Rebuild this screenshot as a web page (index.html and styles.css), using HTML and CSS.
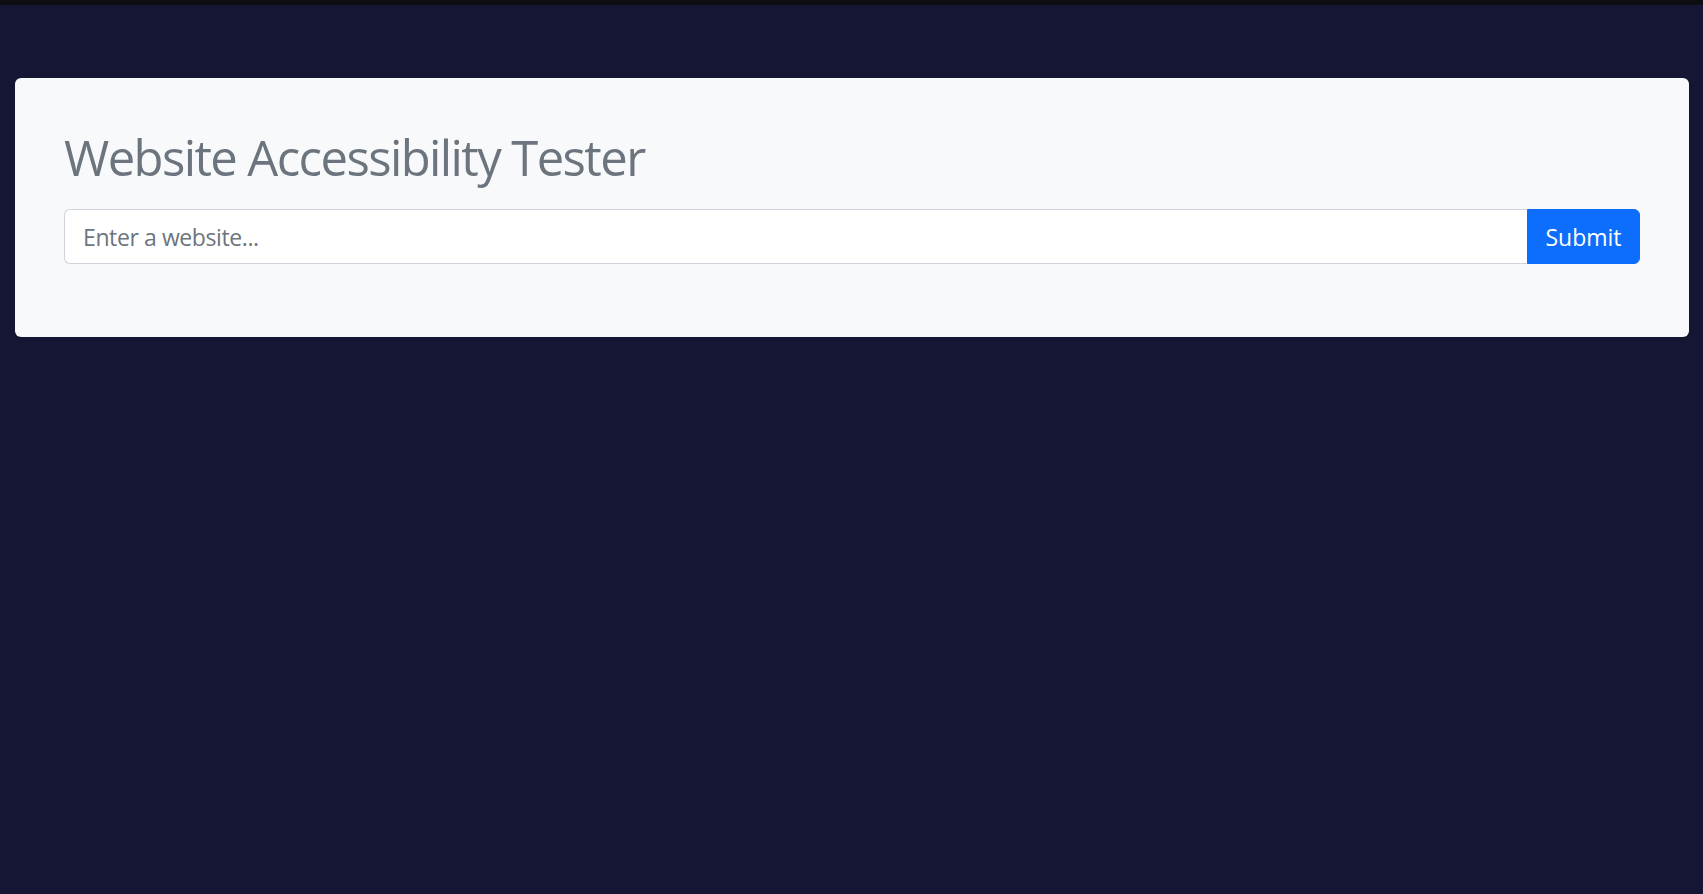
FILE: index.html
```html
<!DOCTYPE html>
<html lang="en">
<head>
<meta charset="utf-8">
<title>Website Accessibility Tester</title>
<link rel="stylesheet" href="styles.css">
</head>
<body>
<div class="topbar"></div>
<main class="page">
  <section class="card">
    <h1 class="title">Website Accessibility Tester</h1>
    <form class="search" onsubmit="return false;">
      <input class="search-input" type="text" placeholder="Enter a website...">
      <button class="search-btn" type="submit">Submit</button>
    </form>
  </section>
</main>
</body>
</html>
```
FILE: styles.css
```css
html, body {
  margin: 0;
  padding: 0;
}
body {
  background: #141634;
  min-height: 894px;
  font-family: "Open Sans", "Noto Sans", sans-serif;
}
.topbar {
  height: 5px;
  background: #0e0e12;
}
.page {
  padding: 73px 14px 0 15px;
}
.card {
  background: #f8f9fa;
  border-radius: 6px;
  padding: 49px 49px 73px 49px;
}
.title {
  margin: 0 0 22px 0;
  font-size: 49px;
  line-height: 60px;
  letter-spacing: -1.6px;
  font-weight: 400;
  color: #6c757d;
}
.search {
  display: flex;
  margin: 0;
}
.search-input {
  flex: 1;
  box-sizing: border-box;
  height: 55px;
  margin: 0;
  padding: 1px 18px 0 18px;
  border: 1px solid #ced4da;
  border-right: none;
  border-radius: 6px 0 0 6px;
  background: #fff;
  font-family: inherit;
  font-size: 23px;
  letter-spacing: -0.4px;
  color: #212529;
  outline: none;
}
.search-input::placeholder {
  color: #6c757d;
  opacity: 1;
}
.search-btn {
  box-sizing: border-box;
  width: 113px;
  height: 55px;
  margin: 0;
  border: 1px solid #0d6efd;
  border-radius: 0 6px 6px 0;
  background: #0d6efd;
  color: #fff;
  font-family: inherit;
  font-size: 23px;
  padding: 1px 0 0 0;
  cursor: pointer;
}
```
